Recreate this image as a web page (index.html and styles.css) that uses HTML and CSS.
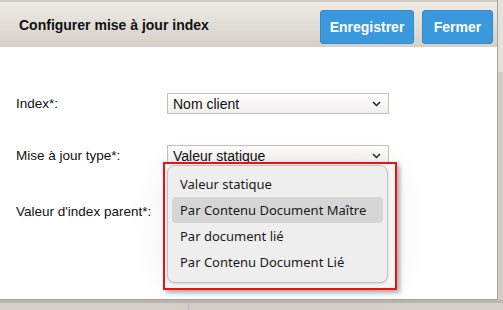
FILE: index.html
```html
<!DOCTYPE html>
<html lang="fr">

<head>
  <meta charset="UTF-8" />
  <meta name="viewport" content="width=device-width, initial-scale=1.0" />
  <title>Configurer mise à jour index</title>
  <link rel="stylesheet" href="styles.css">
</head>

<body>
  <div class="page">
    <div class="dialog">
      <div class="header">
        <h1 class="title">Configurer mise à jour index</h1>
        <div class="actions">
          <button class="btn btn-save">Enregistrer</button>
          <button class="btn btn-close">Fermer</button>
        </div>
      </div>

      <div class="content">
        <div class="form">
          <div class="row">
            <label>Index*:</label>
            <div class="select">
              <span>Nom client</span>
              <svg class="chevron" width="9" height="6" viewBox="0 0 9 6"><path d="M1 1l3.5 3.5L8 1" fill="none" stroke="#222" stroke-width="1.5"/></svg>
            </div>
          </div>
          <div class="row">
            <label>Mise à jour type*:</label>
            <div class="select">
              <span>Valeur statique</span>
              <svg class="chevron" width="9" height="6" viewBox="0 0 9 6"><path d="M1 1l3.5 3.5L8 1" fill="none" stroke="#222" stroke-width="1.5"/></svg>
            </div>
          </div>
          <div class="row row-parent">
            <label>Valeur d'index parent*:</label>
          </div>
        </div>

        <div class="popup-frame">
          <ul class="popup">
            <li>Valeur statique</li>
            <li class="hover">Par Contenu Document Maître</li>
            <li>Par document lié</li>
            <li>Par Contenu Document Lié</li>
          </ul>
        </div>
      </div>
    </div>
    <div class="side"></div>
  </div>
  <div class="footer-bar">
    <div class="footer-cell"></div>
  </div>
</body>

</html>
```

FILE: styles.css
```css
body {
  margin: 0;
  background: #d4d0c8;
  font-family: 'Liberation Sans', Arial, sans-serif;
  width: 503px;
  height: 310px;
  overflow: hidden;
}

.page {
  display: flex;
  height: 300px;
}

.dialog {
  width: 498px;
  display: flex;
  flex-direction: column;
  border-right: 1px solid #a8a49d;
  border-bottom: 1px solid #a8a49d;
  box-sizing: border-box;
  background: #fff;
}

.side {
  flex: 1;
  background: linear-gradient(#e4e1dc 0, #e4e1dc 72px, #d2cec7 72px);
}

.header {
  height: 47px;
  box-sizing: border-box;
  border-top: 2px solid #cfcbc4;
  background: linear-gradient(#eeebe6, #d4d0c8);
  display: flex;
  align-items: center;
  justify-content: space-between;
  padding: 0 4px 0 19px;
}

.title {
  margin: 0;
  font-size: 14px;
  font-weight: bold;
  color: #111;
}

.actions {
  display: flex;
  gap: 8px;
  margin-top: 5px;
}

.btn {
  height: 34px;
  padding: 0;
  border: 1px solid #3489cc;
  border-radius: 3px;
  background: #3a98dc;
  color: #fff;
  font-family: 'Liberation Sans', Arial, sans-serif;
  font-size: 14px;
  font-weight: bold;
}

.btn-save {
  width: 94px;
}

.btn-close {
  width: 71px;
}

.content {
  flex: 1;
  position: relative;
  background: #fff;
}

.form {
  padding: 46px 0 0 16px;
  display: flex;
  flex-direction: column;
  gap: 31px;
}

.row {
  display: flex;
  align-items: center;
  height: 21px;
}

.row-parent {
  margin-top: 4px;
}

.row label {
  width: 151px;
  font-size: 13.5px;
  color: #111;
}

.select {
  width: 222px;
  height: 21px;
  box-sizing: border-box;
  border: 1px solid #c4c1bb;
  background: linear-gradient(#ffffff, #f1efeb);
  display: flex;
  align-items: center;
  justify-content: space-between;
  padding: 0 7px 0 5px;
  font-size: 14px;
  color: #111;
}

.popup-frame {
  position: absolute;
  left: 163px;
  top: 115px;
  width: 234px;
  height: 128px;
  box-sizing: border-box;
  border: 2px solid #ee1111;
  background: #f6f6f6;
  padding: 1px 0 0 2px;
  box-shadow: 3px 3px 4px rgba(0, 0, 0, 0.3), 0 0 40px rgba(0, 0, 0, 0.06);
}

.popup {
  margin: 0;
  list-style: none;
  width: 221px;
  height: 118px;
  box-sizing: border-box;
  border: 1px solid #c2c2c2;
  border-radius: 8px;
  background: #eeeeee;
  padding: 5px 4px;
  box-shadow: 0 1px 3px rgba(0, 0, 0, 0.15);
  font-family: 'Noto Sans', 'Open Sans', sans-serif;
  font-size: 13px;
  color: #1a1a1a;
}

.popup li {
  height: 26px;
  line-height: 26px;
  padding-left: 8px;
  border-radius: 4px;
}

.popup li.hover {
  background: #d6d6d6;
}

.footer-bar {
  height: 10px;
  border-top: 3px solid #bab6af;
  box-sizing: border-box;
  background: #d5d1ca;
  display: flex;
}

.footer-cell {
  width: 188px;
  border-right: 1px solid #bdb9c8;
}
```
